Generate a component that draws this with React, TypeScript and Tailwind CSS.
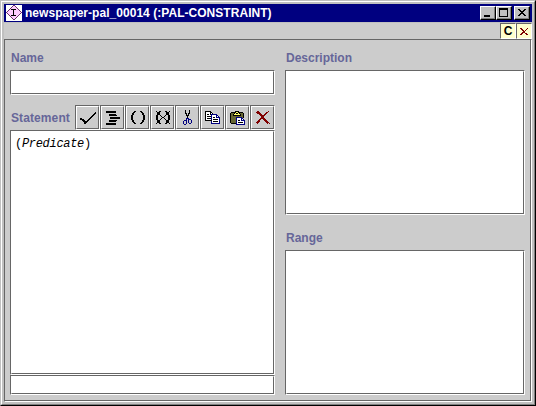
import type { ReactNode } from 'react';

const palette: Record<string, string> = {
  '#': '#000000',
  w: '#ffffff',
  r: '#800000',
  b: '#000080',
  o: '#666633',
  y: '#ffff66',
  g: '#808080',
  p: '#ffccff',
  m: '#663366',
};

function Bitmap({ rows, className = '' }: { rows: string[]; className?: string }) {
  const width = Math.max(...rows.map((r) => r.length));
  return (
    <svg width={width} height={rows.length} shapeRendering="crispEdges" className={`block shrink-0 ${className}`}>
      {rows.flatMap((row, y) =>
        [...row].map((c, x) =>
          palette[c] ? <rect key={`${x}-${y}`} x={x} y={y} width="1" height="1" fill={palette[c]} /> : null,
        ),
      )}
    </svg>
  );
}

const check = [
  '...............#',
  '..............##',
  '.............##.',
  '............##..',
  '...........##...',
  '..........##....',
  '##.......##.....',
  '####....##......',
  '..###..##.......',
  '...#####........',
  '....###.........',
  '....##..........',
];

const indent = [
  '##########....',
  '##########....',
  '..............',
  '...#######....',
  '...########...',
  '..............',
  '....##########',
  '....##########',
  '..............',
  '...########...',
  '...#######....',
  '..............',
  '##########....',
  '##########....',
];

const parens = [
  '...##....##...',
  '..##......##..',
  '.##........##.',
  '.##........##.',
  '##..........##',
  '##..........##',
  '##..........##',
  '##..........##',
  '##..........##',
  '.##........##.',
  '.##........##.',
  '..##......##..',
  '...##....##...',
];

const parensCrossed = [
  '#..##....##..#',
  '.###......###.',
  '.###......###.',
  '.###......###.',
  '##..#....#..##',
  '##...#..#...##',
  '##....##....##',
  '##...#..#...##',
  '##..#....#..##',
  '.###......###.',
  '.###......###.',
  '.###......###.',
  '#..##....##..#',
];

const scissors = [
  '..#...#..',
  '..#...#..',
  '..#...#..',
  '..##.##..',
  '...#.#...',
  '...###...',
  '....#....',
  '....#....',
  '...bbb...',
  '...b.bbb.',
  '.bbb.b..b',
  'b..b.b..b',
  'b..b.b..b',
  'b..b..bb.',
  '.bb......',
];

const copy = [
  '######..........',
  '#wwww##.........',
  '#wwww#w#........',
  '#w##w#bbbbbb....',
  '#wwwwwbwwwwbb...',
  '#w####bwwwwbwb..',
  '#wwwwwbw##wbbbb.',
  '#w####bwwwwwwwb.',
  '#wwwwwbw#####wb.',
  '#######wwwwwwwb.',
  '......bw#####wb.',
  '......bwwwwwwwb.',
  '......bbbbbbbbb.',
];

const paste = [
  '.....####......',
  '.#####yy#####..',
  '#ooo#y##y#ooo#.',
  '#oo#yyyyyy#oo#.',
  '#oo########oo#.',
  '#oooooooooooo#.',
  '#ooooobbbbbbo#.',
  '#ooooobwwwwbb..',
  '#ooooobwwwwbwb.',
  '#ooooobw##wbbbb',
  '#ooooobwwwwwwwb',
  '#ooooobw#####wb',
  '.#####bwwwwwwwb',
  '......bbbbbbbbb',
];

const remove = [
  '.rr.........r.',
  'rrrr......rr..',
  '.rrrr....rr...',
  '...rrr..rr....',
  '....rrrrr.....',
  '.....rrr......',
  '.....rrr......',
  '....rrrrr.....',
  '...rr..rrr....',
  '..rr....rrr...',
  '.rrr.....rrr..',
  'rrr.......rrr.',
  '.r.........r.r',
];

const smallRemove = [
  'rr.....r',
  '.rr...r.',
  '..rr.r..',
  '...rr...',
  '..rrr...',
  '.rr..rr.',
  'rr....rr',
];

const closeGlyph = [
  '##....##',
  '.##..##.',
  '..####..',
  '...##...',
  '..####..',
  '.##..##.',
  '##....##',
];

const appIcon = [
  'wwwwwwwmmwwwwwww',
  'wwwwwwmppmwwwwww',
  'wwwwwmppppmwwwww',
  'wwwwmppppppmwwww',
  'wwwmp#####ppmwww',
  'wwmpppp#pppppmww',
  'wmppppp#ppppppmw',
  'mpppppp#pppppppm',
  'wmppppp#ppppppmw',
  'wwmpppp#pppppmww',
  'wwwmp#####ppmwww',
  'wwwwmppppppmwwww',
  'wwwwwmppppmwwwww',
  'wwwwwwmppmwwwwww',
  'wwwwwwwmmwwwwwww',
  'wwwwwwwwwwwwwwww',
];

const tools = [check, indent, parens, parensCrossed, scissors, copy, paste, remove];

function Field({ className, children }: { className: string; children?: ReactNode }) {
  return (
    <div className={`border border-b-white border-r-white border-l-[#666] border-t-[#666] ${className}`}>
      <div className="h-full border border-b-[#666] border-l-white border-r-[#666] border-t-white bg-white">{children}</div>
    </div>
  );
}

function ToolButton({ rows }: { rows: string[] }) {
  return (
    <button className="block size-[25px] border border-b-white border-l-[#666] border-r-white border-t-[#666]">
      <span className="flex h-full items-center justify-center border border-b-[#666] border-l-white border-r-[#666] border-t-white">
        <Bitmap rows={rows} />
      </span>
    </button>
  );
}

function WindowButton({ children, className = '' }: { children: ReactNode; className?: string }) {
  return (
    <button
      className={`block h-[14px] w-4 border border-b-black border-l-white border-r-black border-t-white ${className}`}
    >
      <span className="flex h-full items-start border-b border-r border-[#808080] bg-[#c0c0c0]">{children}</span>
    </button>
  );
}

function CornerButton({ children }: { children: ReactNode }) {
  return (
    <button className="flex size-4 items-center justify-center border border-b-white border-l-[#666] border-r-white border-t-[#666] bg-[#ffffcc]">
      {children}
    </button>
  );
}

function Label({ children, className = '' }: { children: string; className?: string }) {
  return (
    <div className={`whitespace-nowrap pl-px text-[12px] font-bold leading-[14px] text-[#666699] ${className}`}>
      {children}
    </div>
  );
}

export default function App() {
  return (
    <div className="h-[406px] w-[536px] border border-b-black border-l-[#c0c0c0] border-r-black border-t-[#c0c0c0] font-['Liberation_Sans',Arial,sans-serif]">
      <div className="flex h-full flex-col border border-b-[#808080] border-l-white border-r-[#808080] border-t-white bg-[#c0c0c0] p-0.5">
        <header className="mb-px flex h-[18px] shrink-0 items-center bg-[#000080] px-0.5">
          <Bitmap rows={appIcon} />
          <h1 className="ml-[3px] flex-1 whitespace-nowrap text-[12px] font-bold leading-[18px] tracking-[0.04px] text-white">
            newspaper-pal_00014 (:PAL-CONSTRAINT)
          </h1>
          <WindowButton>
            <span className="ml-[3px] mt-[8px] h-0.5 w-1.5 bg-black" />
          </WindowButton>
          <WindowButton>
            <span className="ml-0.5 mt-px h-[9px] w-[9px] border border-t-2 border-black" />
          </WindowButton>
          <WindowButton className="ml-0.5">
            <Bitmap rows={closeGlyph} className="ml-[3px] mt-0.5" />
          </WindowButton>
        </header>
        <div className="flex h-4 shrink-0 justify-end bg-[#ccc]">
          <CornerButton>
            <span className="text-[12px] font-bold leading-none text-black">C</span>
          </CornerButton>
          <CornerButton>
            <Bitmap rows={smallRemove} />
          </CornerButton>
        </div>
        <main className="h-[363px] border border-b-white border-l-[#666] border-r-white border-t-[#666] bg-[#ccc]">
          <div className="flex h-full gap-[10px] border-b border-r border-[#666] pl-[5px]">
            <section className="w-[265px]">
              <Label className="mb-[5px] mt-[11px]">Name</Label>
              <Field className="h-[25px]" />
              <div className="mt-[10px] flex h-[25px] items-center">
                <Label className="w-[65px] tracking-[0.1px]">Statement</Label>
                {tools.map((rows, i) => (
                  <ToolButton key={i} rows={rows} />
                ))}
              </div>
              <Field className="h-[245px]">
                <p className="pl-[3px] pt-[5px] font-['Liberation_Mono','Courier_New',monospace] text-[12px] leading-[14px] tracking-[-0.3px] text-black">
                  (<i>Predicate</i>)
                </p>
              </Field>
              <Field className="h-5" />
            </section>
            <section className="w-[240px]">
              <Label className="mb-[5px] mt-[11px]">Description</Label>
              <Field className="h-[145px]" />
              <Label className="mb-[5px] mt-4">Range</Label>
              <Field className="h-[145px]" />
            </section>
          </div>
        </main>
      </div>
    </div>
  );
}
